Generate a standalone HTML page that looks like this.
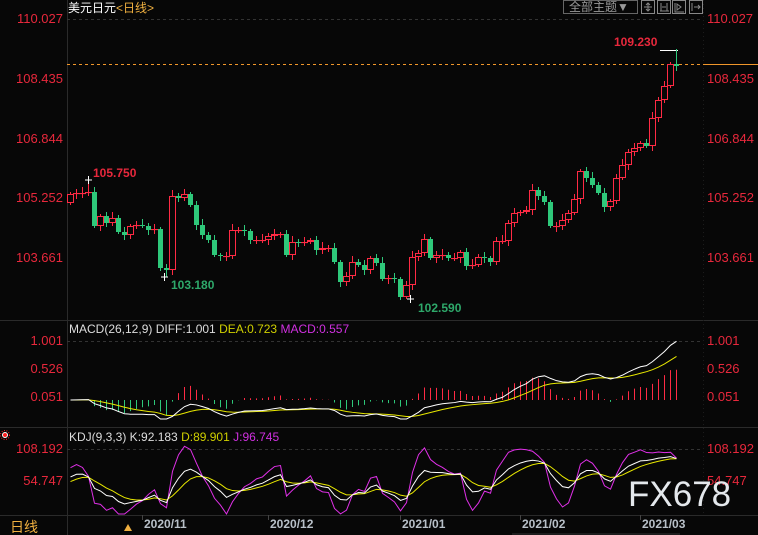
<!DOCTYPE html>
<html><head><meta charset="utf-8">
<style>
html,body{margin:0;padding:0;background:#070707;}
body{width:758px;height:535px;overflow:hidden;position:relative;font-family:"Liberation Sans","Noto Sans CJK SC",sans-serif;}
.t{position:absolute;white-space:nowrap;line-height:1;}
.r{color:#e8283c;font-size:13px;}
.l{right:695px;text-align:right;}
.rt{left:707px;}
</style></head><body>
<svg id="s" width="758" height="535" style="position:absolute;left:0;top:0">
<line x1="67.5" y1="0" x2="67.5" y2="535" stroke="#2a2a2a"/>
<line x1="0" y1="320.5" x2="758" y2="320.5" stroke="#2a2a2a"/>
<line x1="0" y1="427.5" x2="758" y2="427.5" stroke="#2a2a2a"/>
<line x1="0" y1="515.5" x2="758" y2="515.5" stroke="#2a2a2a"/>
<line x1="703.5" y1="0" x2="703.5" y2="515" stroke="#1c1c1c" stroke-dasharray="1 3"/>
<line x1="67" y1="19.5" x2="703" y2="19.5" stroke="#333" stroke-dasharray="3 3"/>
<line x1="67" y1="341.5" x2="703" y2="341.5" stroke="#333" stroke-dasharray="3 3"/>
<line x1="67" y1="449.5" x2="703" y2="449.5" stroke="#333" stroke-dasharray="3 3"/>
<line x1="67" y1="64.5" x2="703" y2="64.5" stroke="#f0962a" stroke-dasharray="3 3"/>
<line x1="703" y1="64.5" x2="758" y2="64.5" stroke="#f0962a"/>
<g stroke="#444"><line x1="142.5" y1="515" x2="142.5" y2="520"/><line x1="268.5" y1="515" x2="268.5" y2="520"/><line x1="400.5" y1="515" x2="400.5" y2="520"/><line x1="520.5" y1="515" x2="520.5" y2="520"/><line x1="640.5" y1="515" x2="640.5" y2="520"/></g>
<line x1="512" y1="534" x2="680" y2="534" stroke="#333"/>
<rect x="563.5" y="0.5" width="74" height="13" fill="none" stroke="#666"/>
<g fill="none" stroke="#888">
<rect x="641.5" y="0.5" width="13" height="13"/><rect x="657.5" y="0.5" width="13" height="13"/><rect x="672.5" y="0.5" width="13" height="13"/><rect x="689.5" y="0.5" width="13" height="13"/>
<path d="M648 3v8M644 7h8M646 5l2-2 2 2M646 9l2 2 2-2"/>
<path d="M661 3v8M667 3v8M662 7h4M660 11h9"/>
<path d="M675 3v9h9M677 4l4 3-4 3z"/>
<path d="M692 3v8M694 7h6M698 5l2 2-2 2"/>
</g>
<line x1="660" y1="50.5" x2="678" y2="50.5" stroke="#fff"/>
<circle cx="5" cy="435" r="2.5" fill="#ff2020" stroke="#fff" stroke-width="1"/>
<circle cx="5" cy="435" r="4.5" fill="none" stroke="#ff2020" stroke-dasharray="1 1.5"/>
<path d="M124 531l4-7 4 7z" fill="#f0b040"/>
<g id="c"></g>
</svg>

<div class="t" style="left:68px;top:2px;font-size:12px;color:#fff">美元日元<span style="color:#f0b040">&lt;日线&gt;</span></div>
<div class="t" style="left:569px;top:1px;font-size:12px;color:#999">全部主题▼</div>

<div class="t r l" style="top:12px">110.027</div>
<div class="t r l" style="top:72px">108.435</div>
<div class="t r l" style="top:132px">106.844</div>
<div class="t r l" style="top:191px">105.252</div>
<div class="t r l" style="top:251px">103.661</div>
<div class="t r rt" style="top:12px">110.027</div>
<div class="t r rt" style="top:72px">108.435</div>
<div class="t r rt" style="top:132px">106.844</div>
<div class="t r rt" style="top:191px">105.252</div>
<div class="t r rt" style="top:251px">103.661</div>

<div class="t" style="left:93px;top:167px;font-size:12px;font-weight:bold;color:#e8283c">105.750</div>
<div class="t" style="left:171px;top:279px;font-size:12px;font-weight:bold;color:#2ea86a">103.180</div>
<div class="t" style="left:418px;top:302px;font-size:12px;font-weight:bold;color:#2ea86a">102.590</div>
<div class="t" style="left:614px;top:36px;font-size:12px;font-weight:bold;color:#e8283c">109.230</div>

<div class="t" style="left:69px;top:323px;font-size:12px;color:#ddd">MACD(26,12,9) DIFF:1.001 <span style="color:#d0d000">DEA:0.723</span> <span style="color:#d030e0">MACD:0.557</span></div>
<div class="t r l" style="top:334px">1.001</div>
<div class="t r l" style="top:362px">0.526</div>
<div class="t r l" style="top:390px">0.051</div>
<div class="t r rt" style="top:334px">1.001</div>
<div class="t r rt" style="top:362px">0.526</div>
<div class="t r rt" style="top:390px">0.051</div>

<div class="t" style="left:69px;top:431px;font-size:12px;color:#ddd">KDJ(9,3,3) K:92.183 <span style="color:#d0d000">D:89.901</span> <span style="color:#d030e0">J:96.745</span></div>
<div class="t r l" style="top:442px">108.192</div>
<div class="t r l" style="top:474px">54.747</div>
<div class="t r rt" style="top:442px">108.192</div>
<div class="t r rt" style="top:474px">54.747</div>

<div class="t" style="left:628px;top:477px;font-size:35px;color:#e4e8ec;letter-spacing:0px">FX678</div>

<div class="t" style="left:10px;top:520px;font-size:14px;color:#f0b040">日线</div>
<div class="t" style="left:144px;top:518px;font-size:12px;font-weight:bold;color:#b8c0c8">2020/11</div>
<div class="t" style="left:270px;top:518px;font-size:12px;font-weight:bold;color:#b8c0c8">2020/12</div>
<div class="t" style="left:402px;top:518px;font-size:12px;font-weight:bold;color:#b8c0c8">2021/01</div>
<div class="t" style="left:522px;top:518px;font-size:12px;font-weight:bold;color:#b8c0c8">2021/02</div>
<div class="t" style="left:642px;top:518px;font-size:12px;font-weight:bold;color:#b8c0c8">2021/03</div>

<script>
(function(){
var C=[194,193,193,192,226,216,223,218,232,235,226,225,226,230,229,268,270,196,198,194,205,225,235,240,255,256,256,230,230,231,240,240,240,236,234,234,255,242,243,242,240,250,248,248,262,282,276,262,265,270,258,263,279,278,279,297,285,257,253,239,258,255,255,258,258,252,266,265,257,258,262,241,241,223,213,212,210,190,196,202,226,226,220,213,199,171,178,185,193,207,201,178,165,152,148,143,146,118,100,86,64,66];
var n=C.length,O=[203];
for(var i=1;i<n;i++)O.push(C[i-1]);
var out='';
function P(y){return 110.027-(y-19)/37.63;}
var hp=[],lp=[],cp=[];
for(var i=0;i<n;i++){
 var o=O[i],c=C[i];if(Math.abs(o-c)<1){o=c+1;}
 var tp=Math.min(o,c),bt=Math.max(o,c);
 var w1=2+(i*7%5),w2=2+(i*3%4);
 var hy=tp-w1,ly=bt+w2;
 if(i==3)hy=180;if(i==16)ly=277;if(i==56)ly=299;if(i==101)hy=49;
 var x=70+i*6,up=c<o;
 var col=up?'#ff2a44':'#2ec87a';
 out+='<line x1="'+(x+0.5)+'" y1="'+hy+'" x2="'+(x+0.5)+'" y2="'+ly+'" stroke="'+col+'"/>';
 if(up)out+='<rect x="'+(x-2.5)+'" y="'+(tp+0.5)+'" width="6" height="'+Math.max(bt-tp-1,0.1)+'" fill="#070707" stroke="'+col+'"/>';
 else out+='<rect x="'+(x-2)+'" y="'+tp+'" width="5" height="'+Math.max(bt-tp,1)+'" fill="'+col+'"/>';
 hp.push(P(hy));lp.push(P(ly));cp.push(P(c));
}
out+='<path d="M85 180h7M88.5 176v8M161 277h7M164.5 273v8M407 299h7M410.5 295v8" stroke="#fff"/>';
var e12=cp[0],e26=cp[0],dea=0,dif=[],de=[],mc=[];
for(var i=0;i<n;i++){e12=e12+(cp[i]-e12)*2/13;e26=e26+(cp[i]-e26)*2/27;var d=e12-e26;dea=dea+(d-dea)*2/10;dif.push(d);de.push(dea);mc.push(2*(d-dea));}
function my(v){return Math.max(323,Math.min(419,400-v*59));}
var pd='',pe='';
for(var i=0;i<n;i++){var x=70.5+i*6;
 var v=mc[i],col=v>=0?'#ff2a44':'#2ec87a';
 out+='<line x1="'+x+'" y1="400" x2="'+x+'" y2="'+my(v)+'" stroke="'+col+'"/>';
 pd+=(i?'L':'M')+x+' '+my(dif[i]);pe+=(i?'L':'M')+x+' '+my(de[i]);}
out+='<path d="'+pe+'" fill="none" stroke="#e8e800"/><path d="'+pd+'" fill="none" stroke="#fff"/>';
var K=50,D=50,pk='',pdd='',pj='';
function ky(v){return Math.max(430,Math.min(514,513.8-v*0.599));}
for(var i=0;i<n;i++){var hh=-1e9,ll=1e9;for(var j=Math.max(0,i-8);j<=i;j++){hh=Math.max(hh,hp[j]);ll=Math.min(ll,lp[j]);}
 var rsv=(cp[i]-ll)/(hh-ll)*100;K=2/3*K+rsv/3;D=2/3*D+K/3;var J=3*K-2*D;var x=70.5+i*6;
 pk+=(i?'L':'M')+x+' '+ky(K);pdd+=(i?'L':'M')+x+' '+ky(D);pj+=(i?'L':'M')+x+' '+ky(J);}
out+='<path d="'+pj+'" fill="none" stroke="#e030e8"/><path d="'+pdd+'" fill="none" stroke="#e8e800"/><path d="'+pk+'" fill="none" stroke="#fff"/>';
document.getElementById('c').innerHTML=out;
})();
</script>
</body></html>
